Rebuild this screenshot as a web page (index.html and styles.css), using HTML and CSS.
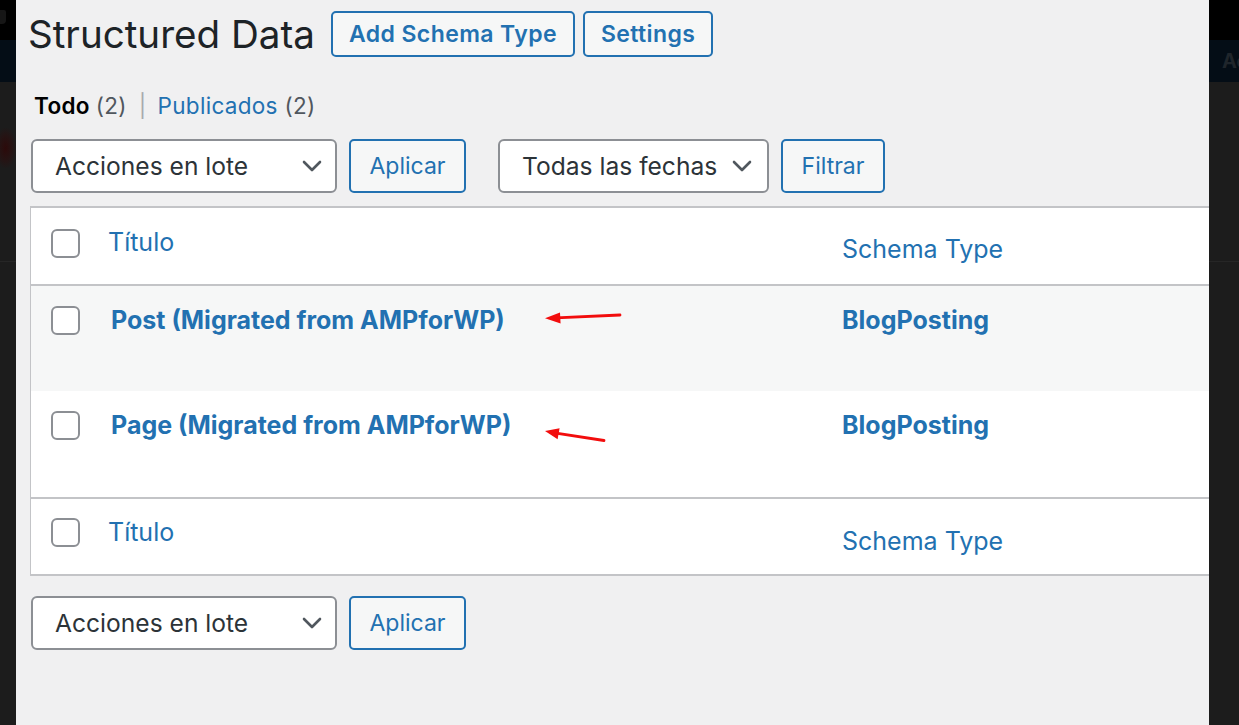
FILE: index.html
```html
<!DOCTYPE html>
<html lang="es">
<head>
<meta charset="utf-8">
<title>Structured Data</title>
<link rel="stylesheet" href="styles.css">
</head>
<body>
<div class="frame">
  <aside class="strip strip-left">
    <div class="strip-top"><span class="glyph"></span></div>
    <div class="strip-nav"></div>
    <div class="strip-body"><span class="smudge"></span></div>
  </aside>

  <main class="main">
    <header class="page-head">
      <h1 class="page-title">Structured Data</h1>
      <a class="btn btn-title">Add Schema Type</a>
      <a class="btn btn-title">Settings</a>
    </header>

    <ul class="views">
      <li class="current">Todo <span class="count">(2)</span></li>
      <li class="sep">|</li>
      <li><a class="link">Publicados</a> <span class="count">(2)</span></li>
    </ul>

    <div class="tablenav">
      <div class="select select-bulk">Acciones en lote<span class="chev"><svg viewBox="0 0 20 12" width="20" height="12"><path d="M2 2 L10 10 L18 2" fill="none" stroke="#50575e" stroke-width="2.6" stroke-linecap="round" stroke-linejoin="round"/></svg></span></div>
      <a class="btn btn-action btn-apply">Aplicar</a>
      <div class="select select-date">Todas las fechas<span class="chev"><svg viewBox="0 0 20 12" width="20" height="12"><path d="M2 2 L10 10 L18 2" fill="none" stroke="#50575e" stroke-width="2.6" stroke-linecap="round" stroke-linejoin="round"/></svg></span></div>
      <a class="btn btn-action btn-filter">Filtrar</a>
    </div>

    <div class="table">
      <div class="row row-head">
        <div class="cell cell-cb"><span class="checkbox"></span></div>
        <div class="cell cell-title head-sortable"><a class="link">Título</a></div>
        <div class="cell cell-type head-plain"><a class="link">Schema Type</a></div>
      </div>
      <div class="row row-item row-alt">
        <div class="cell cell-cb"><span class="checkbox"></span></div>
        <div class="cell cell-title item-title"><a class="link strong">Post (Migrated from AMPforWP)</a></div>
        <div class="cell cell-type item-type"><a class="link strong">BlogPosting</a></div>
        <svg class="arrow arrow-1" viewBox="0 0 80 16" width="80" height="16"><line x1="12" y1="7.8" x2="76" y2="5" stroke="#f20d0d" stroke-width="2.8" stroke-linecap="round"/><polygon points="1,8.2 16,2.6 16.6,13.4" fill="#f20d0d"/></svg>
      </div>
      <div class="row row-item row-last">
        <div class="cell cell-cb"><span class="checkbox"></span></div>
        <div class="cell cell-title item-title"><a class="link strong">Page (Migrated from AMPforWP)</a></div>
        <div class="cell cell-type item-type"><a class="link strong">BlogPosting</a></div>
        <svg class="arrow arrow-2" viewBox="0 0 64 18" width="64" height="18"><line x1="12" y1="6.2" x2="60" y2="13.5" stroke="#f20d0d" stroke-width="2.8" stroke-linecap="round"/><polygon points="1,4 15.6,1.2 13.6,12.2" fill="#f20d0d"/></svg>
      </div>
      <div class="row row-foot">
        <div class="cell cell-cb"><span class="checkbox"></span></div>
        <div class="cell cell-title foot-sortable"><a class="link">Título</a></div>
        <div class="cell cell-type foot-plain"><a class="link">Schema Type</a></div>
      </div>
    </div>

    <div class="tablenav tablenav-bottom">
      <div class="select select-bulk">Acciones en lote<span class="chev"><svg viewBox="0 0 20 12" width="20" height="12"><path d="M2 2 L10 10 L18 2" fill="none" stroke="#50575e" stroke-width="2.6" stroke-linecap="round" stroke-linejoin="round"/></svg></span></div>
      <a class="btn btn-action btn-apply">Aplicar</a>
    </div>
  </main>

  <aside class="strip strip-right">
    <div class="strip-top"></div>
    <div class="strip-nav"><span class="ghost">Ac</span></div>
    <div class="strip-body"></div>
  </aside>
</div>
</body>
</html>
```

FILE: styles.css
```css
* { box-sizing: border-box; }

html, body {
  margin: 0;
  padding: 0;
  height: 100%;
  background: #1c1c1c;
  font-family: Inter, "Liberation Sans", Arial, sans-serif;
}

.frame {
  display: flex;
  width: 1239px;
  height: 725px;
  overflow: hidden;
}

/* side strips (dimmed admin behind the panel) */
.strip {
  display: flex;
  flex-direction: column;
  flex: 0 0 auto;
  overflow: hidden;
}
.strip-left { width: 16px; }
.strip-right { width: 30px; }

.strip-top {
  height: 40px;
  background: #000;
  position: relative;
}
.strip-nav {
  height: 42px;
  background: #040d16;
  display: flex;
  align-items: center;
  overflow: hidden;
}
.strip-body {
  flex: 1;
  position: relative;
  background-image: linear-gradient(#1c1c1c 0, #1c1c1c 179px, #262626 179px, #262626 180px, #1c1c1c 180px);
}
.glyph {
  position: absolute;
  left: 0;
  top: 10px;
  width: 6px;
  height: 14px;
  background: #161616;
  border-radius: 0 2px 4px 0;
}
.smudge {
  position: absolute;
  left: 0;
  top: 46px;
  width: 16px;
  height: 40px;
  background: radial-gradient(ellipse at 35% 50%, #2c0a0a 0, #251414 45%, rgba(28,28,28,0) 75%);
}
.ghost {
  padding-left: 13px;
  color: #1f252b;
  font-weight: 700;
  font-size: 20px;
  white-space: nowrap;
}

/* main panel */
.main {
  flex: 0 0 1193px;
  width: 1193px;
  background: #f0f0f1;
  padding: 11px 0 0 14px;
  overflow: hidden;
}

.page-head {
  display: flex;
  align-items: center;
  height: 46px;
}
.page-title {
  margin: 0 16px 0 -2px;
  font-size: 38.6px;
  font-weight: 400;
  color: #1d2327;
  line-height: 46px;
  white-space: nowrap;
}

.btn {
  display: inline-flex;
  align-items: center;
  justify-content: center;
  background: #f6f7f7;
  color: #2271b1;
  border: 2px solid #2271b1;
  border-radius: 5px;
  white-space: nowrap;
  text-decoration: none;
}
.btn-title {
  height: 46px;
  padding: 0 16px;
  font-size: 23px;
  letter-spacing: 0.4px;
  font-weight: 600;
  margin-right: 8px;
}

.views {
  list-style: none;
  margin: 34px 0 0 0;
  padding: 0 0 0 4px;
  display: flex;
  align-items: center;
  gap: 8px;
  font-size: 22.5px;
  letter-spacing: 0.3px;
  line-height: 30px;
  color: #50575e;
}
.views li { margin: 0; white-space: nowrap; }
.views .current { color: #000; font-weight: 600; }
.views .current .count { font-weight: 400; color: #50575e; }
.views .sep { color: #a7aaad; margin: 0 3px 0 4px; }
.link { color: #2271b1; text-decoration: none; }

.tablenav {
  display: flex;
  align-items: center;
  margin-top: 18px;
  height: 54px;
}
.tablenav-bottom { margin-top: 20px; }

.select {
  position: relative;
  height: 54px;
  display: flex;
  align-items: center;
  background: #fff;
  border: 2px solid #8c8f94;
  border-radius: 6px;
  font-size: 24.6px;
  color: #2c3338;
  padding-left: 22px;
  white-space: nowrap;
}
.select-bulk { width: 306px; margin-left: 1px; }
.select-date { width: 271px; margin-left: 32px; }
.chev {
  position: absolute;
  top: 50%;
  transform: translateY(-50%);
  display: flex;
}
.select-bulk .chev { right: 13px; }
.select-date .chev { right: 15px; }

.btn-action {
  height: 54px;
  font-size: 23px;
  font-weight: 400;
  margin-left: 12px;
}
.btn-apply { width: 117px; }
.btn-filter { width: 104px; }

/* list table */
.table {
  margin-top: 13px;
  width: 1220px;
  background: #fff;
  border: 2px solid #c3c4c7;
  border-right: 0;
  border-left-width: 1px;
}
.row {
  display: grid;
  grid-template-columns: 77px 734px 1fr;
  position: relative;
}
.row-head { height: 78px; border-bottom: 2px solid #c3c4c7; }
.row-item { height: 105px; }
.row-alt { background: #f6f7f7; }
.row-last { height: 106px; }
.row-foot { height: 77px; border-top: 2px solid #c3c4c7; }

.cell { font-size: 25px; line-height: 30px; white-space: nowrap; }
.cell-cb { padding: 21px 0 0 20px; }
.row-item .cell-cb { padding-top: 20px; }
.row-foot .cell-cb { padding-top: 19px; }

.checkbox {
  display: block;
  width: 29px;
  height: 29px;
  border: 2px solid #8c8f94;
  border-radius: 6px;
  background: #fff;
}

.head-sortable { padding-top: 19px; }
.head-plain { padding-top: 26px; }
.foot-sortable { padding-top: 18px; }
.foot-plain { padding-top: 27px; }

.item-title { padding: 19px 0 0 3px; }
.item-type { padding-top: 19px; }
.strong { font-weight: 700; }

.arrow { position: absolute; }
.arrow-1 { left: 513px; top: 24px; }
.arrow-2 { left: 513px; top: 36px; }
```
